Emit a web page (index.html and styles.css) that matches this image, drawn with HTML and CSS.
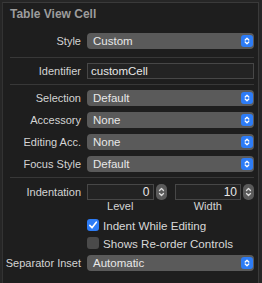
FILE: index.html
```html
<!DOCTYPE html>
<html lang="en">
<head>
    <meta charset="UTF-8">
    <title>Table View Cell</title>
    <link rel="stylesheet" href="styles.css">
</head>
<body>
    <div class="panel">
        <h2 class="title">Table View Cell</h2>

        <div class="row first">
            <span class="label">Style</span>
            <div class="popup"><span>Custom</span><span class="arrows"><svg width="12" height="12" viewBox="0 0 12 12"><path d="M4.2 5 L6 3.2 L7.8 5 M4.2 7 L6 8.8 L7.8 7" /></svg></span></div>
        </div>

        <div class="sep sep-a"></div>

        <div class="row">
            <span class="label">Identifier</span>
            <div class="field">customCell</div>
        </div>

        <div class="sep sep-b"></div>

        <div class="group">
            <div class="row">
                <span class="label">Selection</span>
                <div class="popup"><span>Default</span><span class="arrows"><svg width="12" height="12" viewBox="0 0 12 12"><path d="M4.2 5 L6 3.2 L7.8 5 M4.2 7 L6 8.8 L7.8 7" /></svg></span></div>
            </div>
            <div class="row">
                <span class="label">Accessory</span>
                <div class="popup"><span>None</span><span class="arrows"><svg width="12" height="12" viewBox="0 0 12 12"><path d="M4.2 5 L6 3.2 L7.8 5 M4.2 7 L6 8.8 L7.8 7" /></svg></span></div>
            </div>
            <div class="row">
                <span class="label">Editing Acc.</span>
                <div class="popup"><span>None</span><span class="arrows"><svg width="12" height="12" viewBox="0 0 12 12"><path d="M4.2 5 L6 3.2 L7.8 5 M4.2 7 L6 8.8 L7.8 7" /></svg></span></div>
            </div>
            <div class="row">
                <span class="label">Focus Style</span>
                <div class="popup"><span>Default</span><span class="arrows"><svg width="12" height="12" viewBox="0 0 12 12"><path d="M4.2 5 L6 3.2 L7.8 5 M4.2 7 L6 8.8 L7.8 7" /></svg></span></div>
            </div>
        </div>

        <div class="sep sep-c"></div>

        <div class="row indent">
            <span class="label">Indentation</span>
            <div class="steppers">
                <div class="stepper-group">
                    <div class="number-wrap">
                        <div class="field number">0</div>
                        <span class="stepper"><svg width="11" height="16" viewBox="0 0 11 16"><path d="M3.5 6.5 L5.5 4.5 L7.5 6.5 M3.5 9.5 L5.5 11.5 L7.5 9.5" /></svg></span>
                    </div>
                    <span class="caption">Level</span>
                </div>
                <div class="stepper-group">
                    <div class="number-wrap">
                        <div class="field number">10</div>
                        <span class="stepper"><svg width="11" height="16" viewBox="0 0 11 16"><path d="M3.5 6.5 L5.5 4.5 L7.5 6.5 M3.5 9.5 L5.5 11.5 L7.5 9.5" /></svg></span>
                    </div>
                    <span class="caption">Width</span>
                </div>
            </div>
        </div>

        <div class="checks">
            <label class="check">
                <span class="box checked"><svg width="12" height="12" viewBox="0 0 12 12"><path d="M2.8 6.4 L5 8.8 L9.3 3.2" /></svg></span>
                Indent While Editing
            </label>
            <label class="check">
                <span class="box"></span>
                Shows Re-order Controls
            </label>
        </div>

        <div class="row">
            <span class="label">Separator Inset</span>
            <div class="popup"><span>Automatic</span><span class="arrows"><svg width="12" height="12" viewBox="0 0 12 12"><path d="M4.2 5 L6 3.2 L7.8 5 M4.2 7 L6 8.8 L7.8 7" /></svg></span></div>
        </div>
    </div>
</body>
</html>
```

FILE: styles.css
```css
/* page */
html, body {
    margin: 0;
    padding: 0;
    background-color: #262626;
    height: 100%;
}

body {
    font-family: "Liberation Sans", Arial, sans-serif;
    font-size: 11px;
    color: #d4d4d4;
}

/* inspector panel */
.panel {
    box-sizing: border-box;
    margin: 2px 0 0 2px;
    width: 257px;
    height: 281px;
    background-color: #1e1e1e;
    border-top: 1px solid #3a3a3a;
    border-left: 1px solid #333333;
    border-right: 1px solid #3a3a3a;
    padding: 0 4px 0 0;
}

.title {
    margin: 4px 0 0 7px;
    font-size: 12px;
    line-height: 15px;
    font-weight: bold;
    color: #9c9c9c;
}

/* label + control rows */
.row {
    display: grid;
    grid-template-columns: 78px 1fr;
    column-gap: 6px;
    align-items: center;
    height: 16px;
}

.row.first {
    margin-top: 11px;
}

.label {
    text-align: right;
    white-space: nowrap;
    color: #d4d4d4;
    line-height: 16px;
}

.group {
    display: flex;
    flex-direction: column;
    gap: 6px;
}

/* separators */
.sep {
    height: 1px;
    background-color: #383838;
    margin-left: 7px;
}

.sep-a { margin-top: 8px; margin-bottom: 5px; }
.sep-b { margin-top: 5px; margin-bottom: 5px; }
.sep-c { margin-top: 5px; margin-bottom: 6px; }

/* pop-up button */
.popup {
    display: flex;
    align-items: center;
    justify-content: space-between;
    height: 16px;
    background-color: #5a5a5a;
    border-radius: 4px;
    padding: 0 1px 0 6px;
    color: #e8e8e8;
    font-size: 11.5px;
    line-height: 16px;
}

.arrows {
    display: flex;
    width: 12px;
    height: 12px;
    background-color: #2d7cf6;
    border-radius: 3px;
}

.arrows path,
.stepper path {
    fill: none;
    stroke: #ffffff;
    stroke-width: 1.3;
    stroke-linecap: round;
    stroke-linejoin: round;
}

/* text field */
.field {
    box-sizing: border-box;
    height: 16px;
    background-color: #232323;
    border: 1px solid #474747;
    padding: 0 3px;
    color: #e8e8e8;
    font-size: 11.5px;
    line-height: 14px;
}

/* indentation steppers */
.indent {
    align-items: start;
    height: auto;
}

.steppers {
    display: flex;
    gap: 8px;
}

.stepper-group {
    flex: 1;
    display: flex;
    flex-direction: column;
}

.number-wrap {
    display: flex;
    gap: 2px;
}

.number {
    flex: 1;
    text-align: right;
    font-size: 12px;
}

.stepper {
    display: flex;
    width: 11px;
    height: 16px;
    background-color: #5a5a5a;
    border-radius: 5px;
}

.stepper path {
    stroke: #dddddd;
}

.caption {
    text-align: center;
    padding-right: 13px;
    line-height: 13px;
    color: #d4d4d4;
}

/* checkboxes */
.checks {
    display: flex;
    flex-direction: column;
    gap: 6px;
    margin: 6px 0 6px 84px;
}

.check {
    display: flex;
    align-items: center;
    gap: 4px;
    height: 12px;
    font-size: 11.6px;
    color: #d8d8d8;
}

.box {
    display: flex;
    width: 12px;
    height: 12px;
    border-radius: 3px;
    background-color: #4a4a4a;
}

.box.checked {
    background-color: #2d7cf6;
}

.box path {
    fill: none;
    stroke: #ffffff;
    stroke-width: 1.6;
    stroke-linecap: round;
    stroke-linejoin: round;
}
```
